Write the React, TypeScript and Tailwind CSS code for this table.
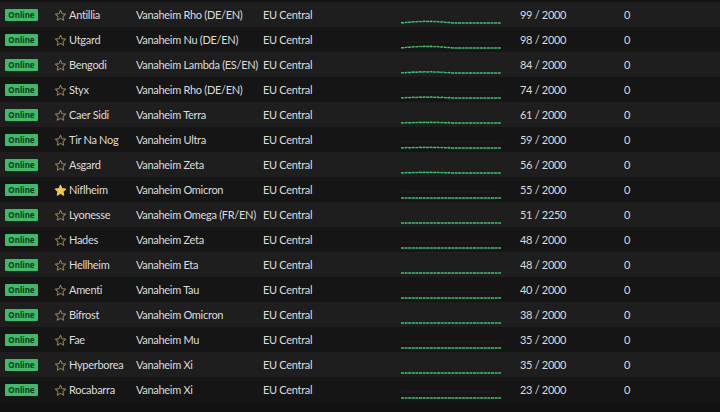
import React from "react";

interface Shard {
  name: string;
  shard: string;
  pop: string;
  fav?: boolean;
  bump: number;
}

const shards: Shard[] = [
  { name: "Antillia", shard: "Vanaheim Rho (DE/EN)", pop: "99 / 2000", bump: 3 },
  { name: "Utgard", shard: "Vanaheim Nu (DE/EN)", pop: "98 / 2000", bump: 3 },
  { name: "Bengodi", shard: "Vanaheim Lambda (ES/EN)", pop: "84 / 2000", bump: 2 },
  { name: "Styx", shard: "Vanaheim Rho (DE/EN)", pop: "74 / 2000", bump: 1.5 },
  { name: "Caer Sidi", shard: "Vanaheim Terra", pop: "61 / 2000", bump: 1 },
  { name: "Tir Na Nog", shard: "Vanaheim Ultra", pop: "59 / 2000", bump: 1 },
  { name: "Asgard", shard: "Vanaheim Zeta", pop: "56 / 2000", bump: 1 },
  { name: "Niflheim", shard: "Vanaheim Omicron", pop: "55 / 2000", fav: true, bump: 0 },
  { name: "Lyonesse", shard: "Vanaheim Omega (FR/EN)", pop: "51 / 2250", bump: 0 },
  { name: "Hades", shard: "Vanaheim Zeta", pop: "48 / 2000", bump: 0 },
  { name: "Hellheim", shard: "Vanaheim Eta", pop: "48 / 2000", bump: 0 },
  { name: "Amenti", shard: "Vanaheim Tau", pop: "40 / 2000", bump: 0 },
  { name: "Bifrost", shard: "Vanaheim Omicron", pop: "38 / 2000", bump: 0 },
  { name: "Fae", shard: "Vanaheim Mu", pop: "35 / 2000", bump: 0 },
  { name: "Hyperborea", shard: "Vanaheim Xi", pop: "35 / 2000", bump: 0 },
  { name: "Rocabarra", shard: "Vanaheim Xi", pop: "23 / 2000", bump: 0 },
];

const Star = ({ filled }: { filled?: boolean }) => (
  <svg width="13" height="13" viewBox="0 0 24 24">
    <path
      d="M12 2.5l2.9 6.1 6.6.8-4.9 4.6 1.3 6.6L12 17.3l-5.9 3.3 1.3-6.6-4.9-4.6 6.6-.8z"
      fill={filled ? "#f4c64a" : "none"}
      stroke={filled ? "#f4c64a" : "#8c7a52"}
      strokeWidth="2"
      strokeLinejoin="round"
    />
  </svg>
);

const Spark = ({ bump }: { bump: number }) => {
  const pts: string[] = [];
  for (let i = 0; i <= 50; i++) {
    const x = i * 2;
    let y = 9;
    if (bump > 0 && i < 26) {
      const t = Math.sin((i / 26) * Math.PI);
      y = 9 - t * bump * 0.5 - (i % 3 === 0 ? 0.3 : 0);
    }
    pts.push(`${x},${y.toFixed(2)}`);
  }
  return (
    <svg width="100" height="11" viewBox="0 0 100 11" className="block">
      <line x1="0" y1="3" x2="100" y2="3" stroke="#241c1c" strokeWidth="1" />
      <polyline
        points={pts.join(" ")}
        fill="none"
        stroke="#3ec46d"
        strokeWidth="1.4"
        strokeDasharray="3 0.6"
      />
    </svg>
  );
};

export default function App() {
  return (
    <div
      className="w-[720px] h-[412px] bg-[#121212] pt-[2px] text-[11px] tracking-[-0.3px] text-[#dcdcdc] overflow-hidden"
      style={{ fontFamily: 'Lato, "Noto Sans", sans-serif' }}
    >
      {shards.map((s, i) => (
        <div
          key={s.name}
          className={`flex items-center h-[25px] pt-[1px] ${i % 2 === 0 ? "bg-[#1e1e1e]" : "bg-[#151515]"}`}
        >
          <div className="w-[50px] pl-[5px] flex">
            <span
              className="w-[33px] h-[12px] bg-[#3dbb69] text-[#163a20] text-[8px] tracking-normal font-bold leading-[12px] text-center rounded-[1px]"
              style={{ fontFamily: '"Noto Sans", sans-serif' }}
            >
              Online
            </span>
          </div>
          <div className="w-[19px] pl-[4px] flex items-center">
            <Star filled={s.fav} />
          </div>
          <div className="w-[67px] whitespace-nowrap">{s.name}</div>
          <div className="w-[127px] whitespace-nowrap">{s.shard}</div>
          <div className="w-[138px]">EU Central</div>
          <div className="w-[119px] self-end pb-[2px]">
            <Spark bump={s.bump} />
          </div>
          <div className="w-[104px]">{s.pop}</div>
          <div className="flex-1">0</div>
        </div>
      ))}
    </div>
  );
}
